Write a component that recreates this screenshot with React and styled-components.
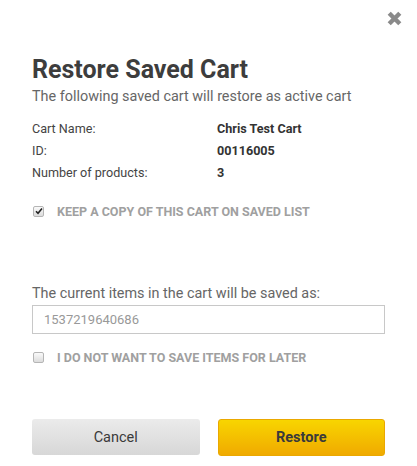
import React, { useState } from 'react';
import styled, { createGlobalStyle } from 'styled-components';

const GlobalStyle = createGlobalStyle`
  body {
    margin: 0;
    background: #fff;
    font-family: Roboto, "Liberation Sans", Arial, sans-serif;
  }
`;

const Modal = styled.div`
  width: 417px;
  height: 466px;
  box-sizing: border-box;
  padding: 11px 32px 0 32px;
  color: #333;
`;

const TopBar = styled.div`
  display: flex;
  justify-content: flex-end;
  margin-right: -17px;
`;

const CloseButton = styled.button`
  width: 15px;
  height: 15px;
  padding: 0;
  border: 0;
  background: none;
  cursor: pointer;
  display: flex;
`;

const Title = styled.h1`
  margin: 30px 0 0 0;
  font-size: 25px;
  line-height: 28px;
  font-weight: 700;
  color: #3d3d3d;
`;

const Subtitle = styled.p`
  margin: 4px 0 0 0;
  font-size: 14.4px;
  line-height: 18px;
  color: #666;
`;

const Details = styled.dl`
  margin: 12px 0 0 0;
  display: grid;
  grid-template-columns: 185px 1fr;
  font-size: 12.6px;
  line-height: 22px;
`;

const Term = styled.dt`
  margin: 0;
  color: #444;
`;

const Value = styled.dd`
  margin: 0;
  font-weight: 700;
  color: #333;
`;

const CheckRow = styled.label`
  display: flex;
  align-items: center;
  gap: 13px;
  margin-top: ${(p) => p.$top}px;
  font-size: 12.5px;
  line-height: 16px;
  font-weight: 700;
  color: #a0a0a0;
  text-transform: uppercase;
  cursor: pointer;
  padding-left: 1px;
`;

const Box = styled.span`
  width: 9px;
  height: 9px;
  border: 1px solid #b5b5b5;
  border-radius: 2px;
  background: linear-gradient(#fafafa, #dcdcdc);
  display: flex;
  align-items: center;
  justify-content: center;
  flex-shrink: 0;
  position: relative;
  top: -1px;
`;

const SaveAsLabel = styled.p`
  margin: 65px 0 0 0;
  font-size: 14.4px;
  line-height: 18px;
  color: #666;
`;

const NameInput = styled.input`
  display: block;
  box-sizing: border-box;
  width: 100%;
  height: 29px;
  margin-top: 2px;
  padding: 0 11px;
  border: 1px solid #c8c8c8;
  font-family: inherit;
  font-size: 13px;
  color: #999;
  outline: none;
`;

const Actions = styled.div`
  display: grid;
  grid-template-columns: 1fr 1fr;
  gap: 18px;
  margin-top: 53px;
  align-items: start;
`;

const ActionButton = styled.button`
  height: ${(p) => (p.$primary ? 37 : 36)}px;
  border-radius: 3px;
  border: ${(p) => (p.$primary ? '1px solid #eaa800' : '0')};
  background: ${(p) =>
    p.$primary
      ? 'linear-gradient(#f8d500, #f0aa00)'
      : 'linear-gradient(#ebebeb, #d7d7d7)'};
  font-family: inherit;
  font-size: 14.5px;
  font-weight: ${(p) => (p.$primary ? 700 : 400)};
  color: #3a3a3a;
  cursor: pointer;
`;

function Check({ checked }) {
  return (
    <Box>
      {checked && (
        <svg width="8" height="8" viewBox="0 0 8 8">
          <path d="M1 4.2 L3 6.2 L7 1.5" stroke="#222" strokeWidth="1.6" fill="none" />
        </svg>
      )}
    </Box>
  );
}

export default function App() {
  const [keepCopy, setKeepCopy] = useState(true);
  const [noSave, setNoSave] = useState(false);

  return (
    <Modal>
      <GlobalStyle />
      <TopBar>
        <CloseButton aria-label="Close">
          <svg width="15" height="15" viewBox="0 0 15 15">
            <path d="M2.2 2.2 L12.8 12.8 M12.8 2.2 L2.2 12.8" stroke="#8a8a8a" strokeWidth="4.4" />
          </svg>
        </CloseButton>
      </TopBar>
      <Title>Restore Saved Cart</Title>
      <Subtitle>The following saved cart will restore as active cart</Subtitle>
      <Details>
        <Term>Cart Name:</Term>
        <Value>Chris Test Cart</Value>
        <Term>ID:</Term>
        <Value>00116005</Value>
        <Term>Number of products:</Term>
        <Value>3</Value>
      </Details>
      <CheckRow $top={20} onClick={() => setKeepCopy(!keepCopy)}>
        <Check checked={keepCopy} />
        Keep a copy of this cart on saved list
      </CheckRow>
      <SaveAsLabel>The current items in the cart will be saved as:</SaveAsLabel>
      <NameInput defaultValue="1537219640686" />
      <CheckRow $top={16} onClick={() => setNoSave(!noSave)}>
        <Check checked={noSave} />
        I do not want to save items for later
      </CheckRow>
      <Actions>
        <ActionButton>Cancel</ActionButton>
        <ActionButton $primary>Restore</ActionButton>
      </Actions>
    </Modal>
  );
}
